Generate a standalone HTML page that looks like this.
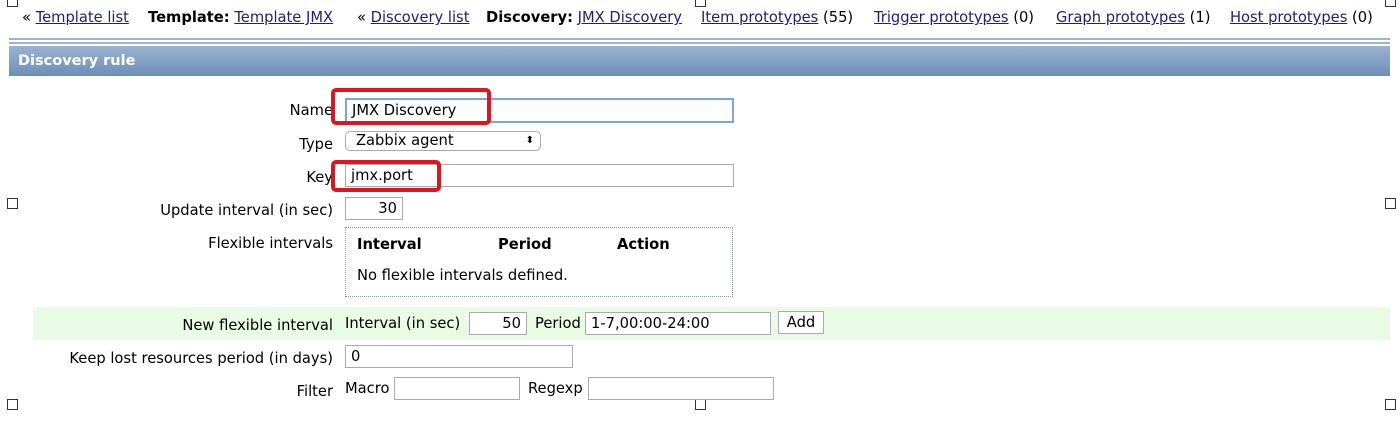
<!DOCTYPE html><html><head><style>
body{margin:0;width:1400px;height:425px;background:#fff;font-family:"DejaVu Sans","Liberation Sans",sans-serif;font-size:14.7px;color:#000;position:relative;overflow:hidden}
.a{position:absolute;white-space:nowrap}
.n{position:absolute;white-space:nowrap;top:9px}
a{color:#1c1c8a;text-decoration:underline}
.l{position:absolute;right:1067px;white-space:nowrap}
.in{position:absolute;border:1px solid #aaa;background:#fff;box-sizing:border-box;height:23px;padding:2px 5px;white-space:nowrap}
.sq{position:absolute;width:9px;height:9px;border:1px solid #333;background:#fff}
.red{position:absolute;border:4px solid #e0141e;border-radius:5px;box-sizing:border-box}
</style></head><body>
<div class="sq" style="left:7px;top:-4px"></div><div class="sq" style="left:695px;top:-4px"></div><div class="sq" style="left:1385px;top:-4px"></div>
<div class="sq" style="left:7px;top:198px"></div><div class="sq" style="left:1385px;top:198px"></div>
<div class="sq" style="left:7px;top:399px"></div><div class="sq" style="left:695px;top:399px"></div><div class="sq" style="left:1385px;top:399px"></div>
<div class="n" style="left:22px">« <a>Template list</a></div>
<div class="n" style="left:148px"><b>Template:</b> <a>Template JMX</a></div>
<div class="n" style="left:357px">« <a>Discovery list</a></div>
<div class="n" style="left:486px"><b>Discovery:</b> <a>JMX Discovery</a></div>
<div class="n" style="left:701px"><a>Item prototypes</a> (55)</div>
<div class="n" style="left:874px"><a>Trigger prototypes</a> (0)</div>
<div class="n" style="left:1056px"><a>Graph prototypes</a> (1)</div>
<div class="n" style="left:1230px"><a>Host prototypes</a> (0)</div>
<div class="a" style="left:9px;top:38px;width:1381px;height:2px;background:#9fb4cc"></div>
<div class="a" style="left:9px;top:42px;width:1381px;height:2px;background:#9fb4cc"></div>
<div class="a" style="left:9px;top:46px;width:1381px;height:30px;background:linear-gradient(#9ab3d0,#6b8fb8);color:#fff;font-weight:bold;font-size:14.5px;line-height:30px;padding-left:9px;box-sizing:border-box">Discovery rule</div>
<div class="a" style="left:33px;top:307px;width:1357px;height:33px;background:#eafbe5"></div>
<div class="l" style="top:102px">Name</div>
<div class="in" style="left:345px;top:98px;width:389px;height:25px;border:2px solid #7aa6e0">JMX Discovery</div>
<div class="red" style="left:331px;top:88px;width:160px;height:37px"></div>
<div class="l" style="top:136px">Type</div>
<div class="in" style="left:345px;top:131px;width:196px;height:20px;border-radius:5px;padding:0 10px;line-height:18px">Zabbix agent<span style="position:absolute;right:6px;font-size:10px">⬍</span></div>
<div class="l" style="top:169px">Key</div>
<div class="in" style="left:345px;top:164px;width:389px">jmx.port</div>
<div class="red" style="left:331px;top:160px;width:110px;height:32px"></div>
<div class="l" style="top:202px">Update interval (in sec)</div>
<div class="in" style="left:345px;top:197px;width:58px;text-align:right">30</div>
<div class="l" style="top:235px">Flexible intervals</div>
<div class="a" style="left:345px;top:227px;width:388px;height:70px;border:1px dotted #8890c0;box-sizing:border-box"></div>
<div class="a" style="left:357px;top:236px;font-weight:bold">Interval</div>
<div class="a" style="left:498px;top:236px;font-weight:bold">Period</div>
<div class="a" style="left:617px;top:236px;font-weight:bold">Action</div>
<div class="a" style="left:357px;top:267px">No flexible intervals defined.</div>
<div class="l" style="top:317px">New flexible interval</div>
<div class="a" style="left:345px;top:315px">Interval (in sec)</div>
<div class="in" style="left:469px;top:312px;width:58px;text-align:right">50</div>
<div class="a" style="left:535px;top:315px">Period</div>
<div class="in" style="left:585px;top:312px;width:186px">1-7,00:00-24:00</div>
<div class="in" style="left:778px;top:311px;width:46px;text-align:center">Add</div>
<div class="l" style="top:350px">Keep lost resources period (in days)</div>
<div class="in" style="left:345px;top:345px;width:228px">0</div>
<div class="l" style="top:383px">Filter</div>
<div class="a" style="left:345px;top:380px">Macro</div>
<div class="in" style="left:394px;top:377px;width:126px"></div>
<div class="a" style="left:528px;top:380px">Regexp</div>
<div class="in" style="left:588px;top:377px;width:186px"></div>
</body></html>
